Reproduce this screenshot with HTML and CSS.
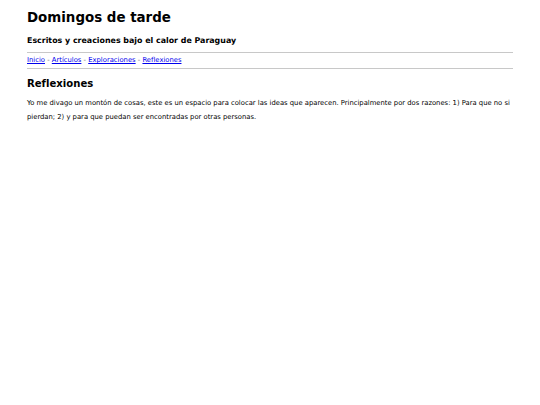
FILE: index.html
```html
<!DOCTYPE html>
<html lang="es">
<head>
<meta charset="utf-8">
<title>Domingos de tarde</title>
<link rel="stylesheet" href="styles.css">
</head>
<body>
<div class="page">
  <header class="site-header">
    <h1 class="site-title">Domingos de tarde</h1>
    <p class="site-subtitle">Escritos y creaciones bajo el calor de Paraguay</p>
  </header>
  <nav class="breadcrumb">
    <a href="#">Inicio</a> - <a href="#">Artículos</a> - <a href="#">Exploraciones</a> - <a href="#">Reflexiones</a>
  </nav>
  <main class="content">
    <h2 class="section-title">Reflexiones</h2>
    <p class="intro">Yo me divago un montón de cosas, este es un espacio para colocar las ideas que aparecen. Principalmente por dos razones: 1) Para que no si pierdan; 2) y para que puedan ser encontradas por otras personas.</p>
  </main>
</div>
</body>
</html>
```
FILE: styles.css
```css
html, body {
  margin: 0;
  padding: 0;
  background: #fff;
}
body {
  font-family: "DejaVu Sans", Verdana, sans-serif;
  color: #000;
}
.page {
  padding: 0 27px;
}
.site-header {
  padding-top: 10.4px;
  padding-bottom: 5.7px;
  border-bottom: 1px solid #c8c8c8;
}
.site-title {
  font-size: 13.4px;
  font-weight: bold;
  margin: 0;
  line-height: 16px;
}
.site-subtitle {
  font-size: 7.9px;
  font-weight: bold;
  margin: 9.9px 0 0;
  line-height: 10px;
}
.breadcrumb {
  font-size: 6.8px;
  line-height: 15px;
  border-bottom: 1px solid #c8c8c8;
  color: #666;
}
.breadcrumb a {
  color: #00e;
}
.section-title {
  font-size: 10.1px;
  font-weight: bold;
  margin: 8px 0 0;
  line-height: 13px;
}
.intro {
  font-size: 6.8px;
  line-height: 14px;
  margin: 6.5px 0 0;
}
```
